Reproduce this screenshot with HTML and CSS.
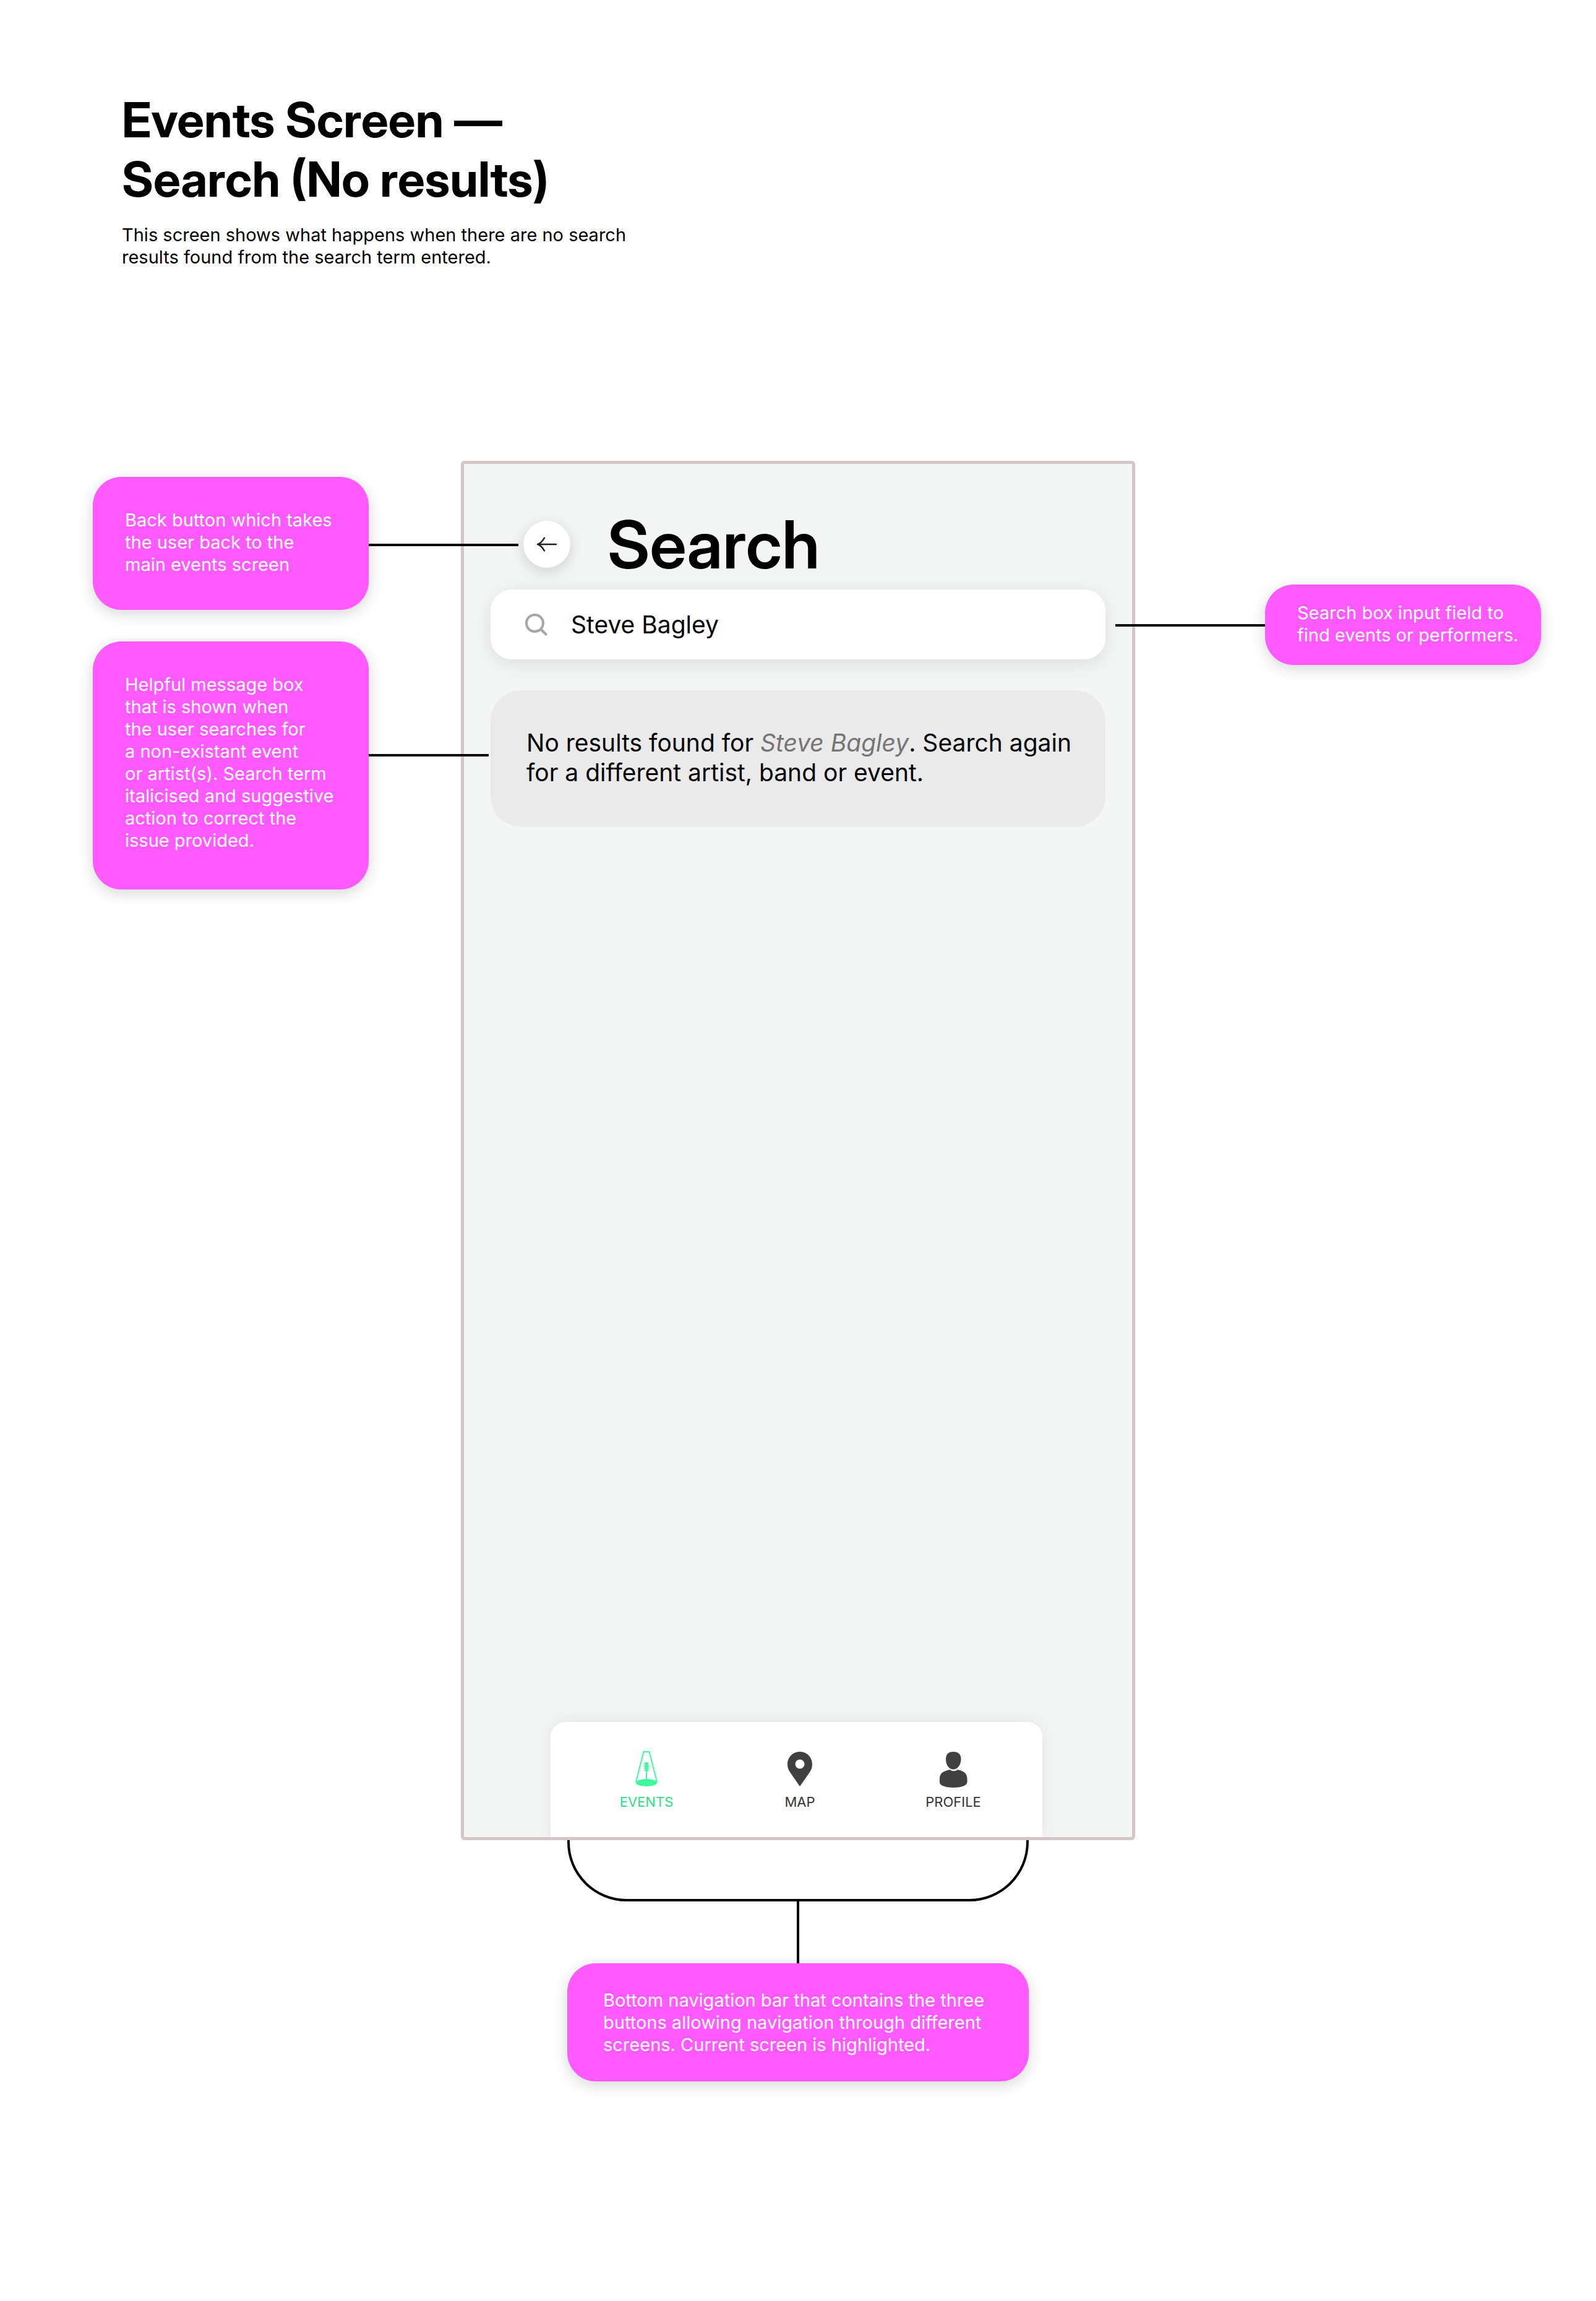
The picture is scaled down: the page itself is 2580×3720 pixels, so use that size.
FILE: index.html
```html
<!DOCTYPE html>
<html lang="en">
<head>
<meta charset="utf-8">
<meta name="viewport" content="width=device-width, initial-scale=1">
<title>Events Screen — Search (No results)</title>
<link rel="stylesheet" href="styles.css">
</head>
<body>
<header class="intro">
  <h1 class="intro-title">Events Screen —<br>Search (No results)</h1>
  <p class="intro-text">This screen shows what happens when there are no search<br>results found from the search term entered.</p>
</header>

<main class="board">
  <aside class="notes notes-left">
    <p class="note note-back">Back button which takes<br>the user back to the<br>main events screen</p>
    <p class="note note-message">Helpful message box<br>that is shown when<br>the user searches for<br>a non-existant event<br>or artist(s). Search term<br>italicised and suggestive<br>action to correct the<br>issue provided.</p>
  </aside>

  <div class="stage">
    <section class="phone">
      <div class="phone-head">
        <button class="back" type="button" aria-label="Back">
          <svg class="back-icon" viewBox="0 0 32 24" aria-hidden="true"><path d="M31 12H1.500M12 1.500C9 7 5 10.500 1.500 12C5 13.500 9 17 12 22.500"/></svg>
        </button>
        <h2 class="phone-title">Search</h2>
      </div>
      <form class="search">
        <svg class="search-icon" viewBox="0 0 36 36" aria-hidden="true"><circle cx="15.500" cy="15.500" r="13.500"/><path d="M25.500 25.500L33.500 33.500"/></svg>
        <input class="search-input" type="text" value="Steve Bagley" aria-label="Search events or performers">
      </form>
      <p class="message">No results found for <em class="term">Steve Bagley</em>. Search again<br>for a different artist, band or event.</p>
      <nav class="tabs">
        <a class="tab tab-active" href="#events">
          <svg class="tab-icon" viewBox="0 0 60 60" aria-hidden="true">
            <path class="beam" d="M13 51L25.500 2H34.500L47 51"/>
            <ellipse cx="30" cy="52" rx="17" ry="6"/>
            <path class="stem" d="M30 30V48"/>
            <path d="M26 22.500a4 3.500 0 0 1 8 0zM25.500 24h9v2h-9zM25.500 27.500h9v2h-9zM26 31h8l-2 2.500h-4z"/>
            <path class="core" d="M30 20V32"/>
          </svg>
          <span>EVENTS</span>
        </a>
        <a class="tab" href="#map">
          <svg class="tab-icon" viewBox="0 0 60 60" aria-hidden="true"><path fill-rule="evenodd" d="M30 2C18.500 2 10 11 10 22.500C10 28 12 32 14 35L30 58L46 35C48 32 50 28 50 22.500C50 11 41.500 2 30 2ZM30 14.500a7.500 7.500 0 1 1 0 15a7.500 7.500 0 1 1 0-15Z"/></svg>
          <span>MAP</span>
        </a>
        <a class="tab" href="#profile">
          <svg class="tab-icon" viewBox="0 0 60 60" aria-hidden="true"><path d="M30 2C38 2 42.500 6 42.500 14C42.500 23 37 30.500 30 30.500C23 30.500 18 23 18 14C18 6 22 2 30 2Z"/><path d="M25 31C27 34 34 34 37 31C46 33 52 36 52.500 45V51C52.500 57 42 60 30 60C18 60 8 57 8 51V45C8.500 36 15 33 25 31Z"/></svg>
          <span>PROFILE</span>
        </a>
      </nav>
    </section>
    <div class="bracket"></div>
    <div class="drop"></div>
    <p class="note note-nav">Bottom navigation bar that contains the three<br>buttons allowing navigation through different<br>screens. Current screen is highlighted.</p>
  </div>

  <aside class="notes notes-right">
    <p class="note note-search">Search box input field to<br>find events or performers.</p>
  </aside>
</main>
</body>
</html>
```
FILE: styles.css
```css
* {
  box-sizing: border-box;
}

body {
  margin: 0;
  padding: 146px 89px 355px 150px;
  background: #fff;
  color: #000;
  font-family: Inter, "Liberation Sans", sans-serif;
}

h1, h2, p {
  margin: 0;
}

/* Page heading */
.intro {
  padding-left: 47px;
  margin-bottom: 311px;
}

.intro-title {
  font-family: "Inter Display", Inter, "Liberation Sans", sans-serif;
  font-size: 78px;
  font-weight: 700;
  line-height: 96px;
}

.intro-text {
  margin-top: 24px;
  font-size: 29px;
  line-height: 36px;
}

/* Notes either side of the phone */
.board {
  display: grid;
  grid-template-columns: minmax(0, 595fr) minmax(0, 1090fr) minmax(0, 656fr);
  align-items: start;
}

.notes {
  display: flex;
  flex-direction: column;
}

.notes-left {
  align-items: flex-start;
  gap: 51px;
  padding-top: 26px;
}

.notes-right {
  align-items: flex-end;
  padding-top: 200px;
}

.note {
  position: relative;
  width: 446px;
  padding: 52px;
  border-radius: 46px;
  background: #ff5aff;
  box-shadow: 0 6px 24px rgba(0, 0, 0, 0.16);
  color: #fff;
  font-size: 29px;
  line-height: 36px;
  white-space: nowrap;
}

/* Leader line from a note to the control it describes */
.note-back::after,
.note-message::after,
.note-search::after {
  content: "";
  position: absolute;
  top: var(--anchor);
  left: 100%;
  width: var(--reach);
  height: 4px;
  background: #000;
}

.note-back {
  --anchor: 108px;
  --reach: 242px;
  padding-bottom: 55px;
}

.note-message {
  --anchor: 182px;
  --reach: 194px;
  padding-bottom: 61px;
}

.note-search {
  --anchor: 64px;
  --reach: 242px;
  padding-top: 28px;
  padding-bottom: 30px;
}

.note-search::after {
  right: 100%;
  left: auto;
}

.note-nav {
  width: 746px;
  padding: 42px 58px 41px;
}

.stage {
  display: flex;
  flex-direction: column;
  align-items: center;
}

.notes {
  z-index: 1;
}

.bracket {
  width: 746px;
  height: 99px;
  border: 4px solid #000;
  border-top: 0;
  border-radius: 0 0 96px 96px;
}

.drop {
  width: 4px;
  height: 100px;
  background: #000;
}

/* Phone screen */
.phone {
  display: flex;
  flex-direction: column;
  width: 100%;
  min-height: 2230px;
  padding-top: 80px;
  overflow: hidden;
  border: 5px solid #d1c7c8;
  border-radius: 6px;
  background: #f4f6f5;
}

.phone-head {
  display: flex;
  align-items: center;
  gap: 60px;
  padding-left: 96px;
}

.back {
  display: grid;
  place-items: center;
  width: 76px;
  height: 76px;
  padding: 0;
  border: 0;
  border-radius: 50%;
  background: #fff;
  box-shadow: 0 6px 24px rgba(0, 0, 0, 0.16);
}

.back-icon {
  width: 32px;
  height: 24px;
  fill: none;
  stroke: #222;
  stroke-width: 2.5;
  stroke-linecap: round;
}

.phone-title {
  font-family: "Inter Display", Inter, "Liberation Sans", sans-serif;
  font-size: 107px;
  font-weight: 600;
  line-height: 100px;
}

.search {
  display: flex;
  align-items: center;
  gap: 38px;
  height: 113px;
  margin: 23px 43px 0;
  padding: 0 56px;
  border-radius: 34px;
  background: #fff;
  box-shadow: 0 6px 32px rgba(0, 0, 0, 0.1);
}

.search-icon {
  width: 36px;
  height: 36px;
  fill: none;
  stroke: #a6a6a6;
  stroke-width: 4;
  stroke-linecap: round;
}

.search-input {
  flex: 1;
  min-width: 0;
  padding: 0;
  border: 0;
  outline: 0;
  background: transparent;
  color: #000;
  font: 400 39px/48px Inter, "Liberation Sans", sans-serif;
}

.message {
  margin: 50px 43px 0;
  padding: 61px 40px 64px 58px;
  border-radius: 50px;
  background: #eaeaea;
  font-size: 39px;
  line-height: 48px;
  white-space: nowrap;
}

.term {
  color: #757575;
}

/* Tab bar */
.tabs {
  display: grid;
  grid-template-columns: repeat(3, 1fr);
  height: 186px;
  margin: auto 145px 0 140px;
  padding: 46px 20px 0 31px;
  border-radius: 24px 24px 0 0;
  background: #fff;
  box-shadow: 0 0 32px rgba(0, 0, 0, 0.08);
}

.tab {
  display: flex;
  flex-direction: column;
  align-items: center;
  gap: 9px;
  color: #333;
  font-size: 22px;
  line-height: 28px;
  text-decoration: none;
}

.tab-icon {
  width: 60px;
  height: 60px;
  fill: #404040;
}

.tab-active {
  color: #2cdf84;
}

.tab-active .tab-icon {
  fill: #3efa9f;
  stroke: #3efa9f;
  stroke-width: 0;
}

.tab-active .beam {
  fill: none;
  stroke-width: 2;
}

.tab-active .stem {
  stroke-width: 2;
}

.tab-active .core {
  stroke-width: 4;
}
```
